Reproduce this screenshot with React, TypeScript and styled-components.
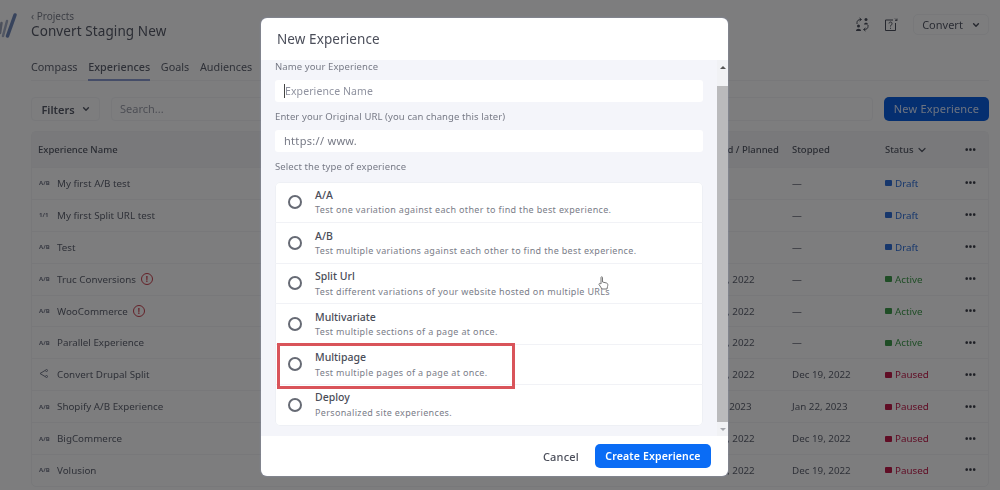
import React from "react";
import styled, { createGlobalStyle } from "styled-components";

const Global = createGlobalStyle`
  html, body { margin: 0; height: 100%; overflow: hidden; background: #fbfbfd; }
  body { font-family: "Noto Sans", "Open Sans", sans-serif; }
`;

const Page = styled.div`
  display: flex;
  height: 490px;
  overflow: hidden;
  background: #fbfbfd;
  color: #565a68;
  filter: blur(0.7px);
`;
const Sidebar = styled.div`
  width: 31px;
  flex: none;
  padding-top: 13px;
  box-sizing: border-box;
`;
const Main = styled.div`
  flex: 1;
  min-width: 0;
  padding-right: 11px;
  display: flex;
  flex-direction: column;
`;
const Header = styled.header`
  display: flex;
  justify-content: space-between;
  height: 58px;
`;
const Crumbs = styled.div`
  padding-top: 10px;
`;
const Back = styled.div`
  font-size: 10px;
  line-height: 13px;
  color: #7b7f8c;
`;
const Title = styled.div`
  font-size: 13.5px;
  line-height: 16px;
  color: #565a68;
  letter-spacing: 0.1px;
`;
const HeadRight = styled.div`
  display: flex;
  align-items: center;
  gap: 14px;
  height: 49px;
  svg { color: #4c505e; }
`;
const Select = styled.div`
  width: 76px;
  height: 21px;
  box-sizing: border-box;
  border: 1px solid #f0f1f5;
  border-radius: 5px;
  display: flex;
  align-items: center;
  justify-content: center;
  gap: 9px;
  font-size: 11px;
  color: #565a68;
`;
const Tabs = styled.nav`
  display: flex;
  gap: 10.7px;
  height: 23px;
  border-bottom: 1px solid #f0f1f5;
  box-sizing: border-box;
`;
const Tab = styled.div<{ $active?: boolean }>`
  font-size: 10.8px;
  line-height: 18px;
  height: 23px;
  box-sizing: border-box;
  color: #5f6371;
  border-bottom: ${(p) => (p.$active ? "2px solid #8a9ad0" : "none")};
  font-weight: ${(p) => (p.$active ? 500 : 400)};
`;
const Toolbar = styled.div`
  display: flex;
  gap: 11px;
  margin-top: 16px;
  height: 24px;
`;
const FilterButton = styled.div`
  width: 69px;
  box-sizing: border-box;
  border: 1px solid #f0f1f5;
  border-radius: 4px;
  display: flex;
  align-items: center;
  justify-content: center;
  gap: 7px;
  font-size: 11px;
  font-weight: 600;
  color: #565a68;
`;
const Search = styled.div`
  flex: 1;
  box-sizing: border-box;
  border: 1px solid #f0f1f5;
  border-radius: 4px;
  padding-left: 8px;
  font-size: 11px;
  line-height: 22px;
  color: #9a9daa;
`;
const NewButton = styled.div`
  width: 105px;
  background: #0a5ee0;
  border-radius: 5px;
  color: #d6e4ff;
  font-size: 11px;
  line-height: 24px;
  text-align: center;
  letter-spacing: 0.2px;
`;
const Table = styled.div`
  margin-top: 10px;
  border: 1px solid #f0f1f5;
  border-radius: 5px;
  font-size: 9.8px;
`;
const cols = "grid-template-columns: 662px 92px 93px 80px 1fr;";
const HeadRow = styled.div`
  display: grid;
  ${cols}
  align-items: center;
  height: 35px;
  padding-left: 6px;
  background: #f2f3f7;
  font-size: 9.5px;
  font-weight: 500;
  color: #555966;
`;
const StatusHead = styled.div`
  display: flex;
  align-items: center;
  gap: 3px;
  svg { stroke-width: 1.2; }
`;
const Row = styled.div`
  display: grid;
  ${cols}
  align-items: center;
  height: 31.9px;
  box-sizing: border-box;
  padding-left: 6px;
  border-top: 1px solid #f0f1f5;
  color: #5f6371;
`;
const NameCell = styled.div`
  display: flex;
  align-items: center;
`;
const StartedCell = styled.div`
  margin-left: -4px;
`;
const TypeMark = styled.span`
  width: 19px;
  flex: none;
  font-size: 6px;
  font-weight: 700;
  color: #74788a;
  padding-left: 1px;
  box-sizing: border-box;
`;
const Warn = styled.span`
  width: 12px;
  height: 12px;
  margin-left: 5px;
  box-sizing: border-box;
  border: 1.5px solid #c8414f;
  border-radius: 50%;
  font-size: 8px;
  line-height: 9px;
  font-weight: 700;
  text-align: center;
  color: #c8414f;
`;
const Status = styled.div<{ $c: string }>`
  display: flex;
  align-items: center;
  gap: 3px;
  color: ${(p) => p.$c};
  &::before {
    content: "";
    width: 7px;
    height: 6px;
    border-radius: 1px;
    background: ${(p) => p.$c};
  }
`;
const Dots = styled.div`
  font-size: 9px;
  font-weight: 700;
  letter-spacing: 0.4px;
  color: #3c3f4a;
  line-height: 10px;
`;

const Backdrop = styled.div`
  position: fixed;
  inset: 0;
  background: rgba(0, 0, 0, 0.5);
  display: flex;
  justify-content: center;
  align-items: flex-start;
  padding-right: 11px;
`;
const Modal = styled.div`
  width: 467px;
  height: 458px;
  margin-top: 18px;
  background: #fff;
  border-radius: 6px;
  overflow: hidden;
  display: flex;
  flex-direction: column;
  filter: blur(0.3px);
  box-shadow: 0 0 2px #8f98b8;
`;
const ModalHead = styled.div`
  height: 42px;
  flex: none;
  padding-left: 16px;
  font-size: 13.5px;
  line-height: 42px;
  color: #4b4e5a;
  letter-spacing: 0.1px;
`;
const ModalBody = styled.div`
  flex: 1;
  min-height: 0;
  display: flex;
  background: #f4f5fa;
`;
const Form = styled.div`
  flex: 1;
  min-width: 0;
  padding: 0 14px;
`;
const Label = styled.div`
  font-size: 9.5px;
  line-height: 13px;
  color: #777a86;
  letter-spacing: 0.1px;
  margin-top: 8px;
  &:first-child { margin-top: 0; }
`;
const Input = styled.div<{ $dark?: boolean }>`
  height: 22px;
  margin-top: 7px;
  padding-left: 9px;
  background: #fff;
  border-radius: 3px;
  font-size: ${(p) => (p.$dark ? "11px" : "10.5px")};
  line-height: 22px;
  letter-spacing: ${(p) => (p.$dark ? "0.3px" : "0.1px")};
  color: ${(p) => (p.$dark ? "#777a86" : "#9093a0")};
`;
const Caret = styled.span`
  border-left: 1px solid #444;
`;
const List = styled.div`
  margin-top: 9px;
  padding-bottom: 1.5px;
  background: #fff;
  border-radius: 5px;
  box-shadow: 0 0 0 1px #eef0f5 inset;
  position: relative;
`;
const Option = styled.div`
  height: 40.4px;
  box-sizing: border-box;
  display: flex;
  align-items: center;
  padding-left: 13px;
  gap: 13px;
  border-top: 1px solid #f1f2f6;
  &:first-child { border-top: none; }
`;
const Radio = styled.span`
  width: 14px;
  height: 14px;
  flex: none;
  box-sizing: border-box;
  border: 2px solid #666a74;
  border-radius: 50%;
`;
const OptionText = styled.div`
  min-width: 0;
`;
const OptionTitle = styled.div`
  font-size: 10.5px;
  line-height: 14px;
  font-weight: 500;
  color: #4a4d58;
`;
const OptionDesc = styled.div`
  font-size: 9px;
  line-height: 13px;
  margin-top: 1.5px;
  letter-spacing: 0.34px;
  color: #7a7d88;
  white-space: nowrap;
`;
const Highlight = styled.div`
  position: absolute;
  left: 2px;
  top: 161px;
  width: 238px;
  height: 46px;
  box-sizing: border-box;
  border: 3px solid #d9545a;
  pointer-events: none;
`;
const Cursor = styled.svg`
  position: absolute;
  left: 323px;
  top: 94px;
`;
const Scrollbar = styled.div`
  width: 11px;
  flex: none;
  background: #f1f2f5;
  display: flex;
  flex-direction: column;
  align-items: center;
`;
const Arrow = styled.div<{ $down?: boolean }>`
  height: 14px;
  flex: none;
  width: 100%;
  display: flex;
  align-items: center;
  justify-content: center;
  &::before {
    content: "";
    border-left: 3px solid transparent;
    border-right: 3px solid transparent;
    ${(p) => (p.$down ? "border-top: 3px solid #a5a7ad;" : "border-bottom: 3px solid #555;")}
  }
`;
const Thumb = styled.div`
  flex: 1;
  width: 100%;
  margin-top: 12px;
  background: #bababc;
`;
const ModalFoot = styled.div`
  height: 40px;
  flex: none;
  display: flex;
  align-items: center;
  justify-content: flex-end;
  gap: 16px;
  padding: 0 17px 0 0;
`;
const Cancel = styled.div`
  font-size: 11px;
  font-weight: 500;
  color: #4b4e5a;
  letter-spacing: 0.2px;
`;
const Create = styled.div`
  width: 116px;
  height: 24px;
  background: #0a6cf5;
  border-radius: 5px;
  color: #fff;
  font-size: 10.5px;
  font-weight: 600;
  line-height: 24px;
  text-align: center;
  letter-spacing: 0.15px;
`;

const Chevron = ({ size = 8 }: { size?: number }) => (
  <svg width={size} height={size} viewBox="0 0 10 10" fill="none" stroke="currentColor" strokeWidth="1.8" strokeLinecap="round" strokeLinejoin="round">
    <path d="M2 3.5 5 6.5 8 3.5" />
  </svg>
);

const Logo = () => (
  <svg width="18" height="25" viewBox="0 0 18 25" fill="none" strokeLinecap="round">
    <path d="M1.500 10 0 20" stroke="#9aa2b8" strokeWidth="2.500" />
    <path d="M7 8 3 23" stroke="#a4aec6" strokeWidth="2.500" />
    <path d="M15 2 7.500 23" stroke="#6f86b8" strokeWidth="3.500" />
  </svg>
);

const SwapIcon = () => (
  <svg width="15" height="15" viewBox="0 0 15 15" fill="none" stroke="currentColor" strokeWidth="1">
    <path d="M2 7V5.500C2 3.500 3.500 2.500 6 2.500M4.500 1 6.500 2.500 4.500 4" />
    <path d="M13 8V9.500C13 11.500 11.500 12.500 9 12.500M10.500 11 8.500 12.500 10.500 14" />
    <circle cx="11" cy="2.500" r="1.500" fill="currentColor" stroke="none" />
    <path d="M9 7.500C9 5 13 5 13 7.500Z" fill="currentColor" stroke="none" />
    <circle cx="3.500" cy="9" r="1.500" fill="currentColor" stroke="none" />
    <path d="M1 14C1 11 6 11 6 14Z" fill="currentColor" stroke="none" />
  </svg>
);

const HelpIcon = () => (
  <svg width="15" height="15" viewBox="0 0 15 15" fill="none" stroke="currentColor" strokeWidth="1">
    <path d="M9 3H1.500V13.500H11.500V6" />
    <path d="M5 6.500C5 4.500 8 4.500 8 6.500 8 8 6.500 8 6.500 9.500M6.500 10.800V11.800" />
    <path d="M11 1.500 13 3.500M13 1.500V3.500H11" strokeWidth="0.8" />
  </svg>
);

const BranchIcon = () => (
  <svg width="9" height="9" viewBox="0 0 9 9" fill="none" stroke="#74788a" strokeWidth="1">
    <path d="M1 4.500 6 1.500M1 4.500 6 7.500" />
    <circle cx="7.500" cy="1.500" r="1" />
    <circle cx="7.500" cy="7.500" r="1" />
  </svg>
);

const BLUE = "#2f6fd8";
const GREEN = "#3f9a4d";
const RED = "#c01a4a";

const rows = [
  { type: "A/B", name: "My first A/B test", started: "", stopped: "—", status: "Draft", c: BLUE },
  { type: "1/1", name: "My first Split URL test", started: "", stopped: "—", status: "Draft", c: BLUE },
  { type: "A/B", name: "Test", started: "", stopped: "—", status: "Draft", c: BLUE },
  { type: "A/B", name: "Truc Conversions", warn: true, started: "Dec 19, 2022", stopped: "—", status: "Active", c: GREEN },
  { type: "A/B", name: "WooCommerce", warn: true, started: "Dec 19, 2022", stopped: "—", status: "Active", c: GREEN },
  { type: "A/B", name: "Parallel Experience", started: "Dec 19, 2022", stopped: "—", status: "Active", c: GREEN },
  { type: "split", name: "Convert Drupal Split", started: "Dec 19, 2022", stopped: "Dec 19, 2022", status: "Paused", c: RED },
  { type: "A/B", name: "Shopify A/B Experience", started: "Jan 12, 2023", stopped: "Jan 22, 2023", status: "Paused", c: RED },
  { type: "A/B", name: "BigCommerce", started: "Dec 19, 2022", stopped: "Dec 19, 2022", status: "Paused", c: RED },
  { type: "A/B", name: "Volusion", started: "Dec 19, 2022", stopped: "Dec 19, 2022", status: "Paused", c: RED },
];

const options = [
  { t: "A/A", d: "Test one variation against each other to find the best experience." },
  { t: "A/B", d: "Test multiple variations against each other to find the best experience." },
  { t: "Split Url", d: "Test different variations of your website hosted on multiple URLs" },
  { t: "Multivariate", d: "Test multiple sections of a page at once." },
  { t: "Multipage", d: "Test multiple pages of a page at once." },
  { t: "Deploy", d: "Personalized site experiences." },
];

export default function App() {
  return (
    <>
      <Global />
      <Page>
        <Sidebar>
          <Logo />
        </Sidebar>
        <Main>
          <Header>
            <Crumbs>
              <Back>‹ Projects</Back>
              <Title>Convert Staging New</Title>
            </Crumbs>
            <HeadRight>
              <SwapIcon />
              <HelpIcon />
              <Select>
                Convert <Chevron />
              </Select>
            </HeadRight>
          </Header>
          <Tabs>
            <Tab>Compass</Tab>
            <Tab $active>Experiences</Tab>
            <Tab>Goals</Tab>
            <Tab>Audiences</Tab>
          </Tabs>
          <Toolbar>
            <FilterButton>
              Filters <Chevron />
            </FilterButton>
            <Search>Search...</Search>
            <NewButton>New Experience</NewButton>
          </Toolbar>
          <Table>
            <HeadRow>
              <div>Experience Name</div>
              <div>Started / Planned</div>
              <div>Stopped</div>
              <StatusHead>
                Status <Chevron size={10} />
              </StatusHead>
              <Dots>•••</Dots>
            </HeadRow>
            {rows.map((r) => (
              <Row key={r.name}>
                <NameCell>
                  <TypeMark>{r.type === "split" ? <BranchIcon /> : r.type}</TypeMark>
                  {r.name}
                  {r.warn && <Warn>!</Warn>}
                </NameCell>
                <StartedCell>{r.started}</StartedCell>
                <div>{r.stopped}</div>
                <Status $c={r.c}>{r.status}</Status>
                <Dots>•••</Dots>
              </Row>
            ))}
          </Table>
        </Main>
      </Page>
      <Backdrop>
        <Modal>
          <ModalHead>New Experience</ModalHead>
          <ModalBody>
            <Form>
              <Label>Name your Experience</Label>
              <Input>
                <Caret />
                Experience Name
              </Input>
              <Label>Enter your Original URL (you can change this later)</Label>
              <Input $dark>https:// www.</Input>
              <Label>Select the type of experience</Label>
              <List>
                {options.map((o) => (
                  <Option key={o.t}>
                    <Radio />
                    <OptionText>
                      <OptionTitle>{o.t}</OptionTitle>
                      <OptionDesc>{o.d}</OptionDesc>
                    </OptionText>
                  </Option>
                ))}
                <Highlight />
                <Cursor width="11" height="14" viewBox="0 0 11 14" fill="#fff" stroke="#777" strokeWidth="1">
                  <path d="M3 1.500C3 .5 4.500 .5 4.500 1.500V6L8.500 7C10 7.500 10 9 9.500 10.500L9 13H4L1 8.500C.5 7.500 2 7 3 8Z" />
                </Cursor>
              </List>
            </Form>
            <Scrollbar>
              <Arrow />
              <Thumb />
              <Arrow $down />
            </Scrollbar>
          </ModalBody>
          <ModalFoot>
            <Cancel>Cancel</Cancel>
            <Create>Create Experience</Create>
          </ModalFoot>
        </Modal>
      </Backdrop>
    </>
  );
}
